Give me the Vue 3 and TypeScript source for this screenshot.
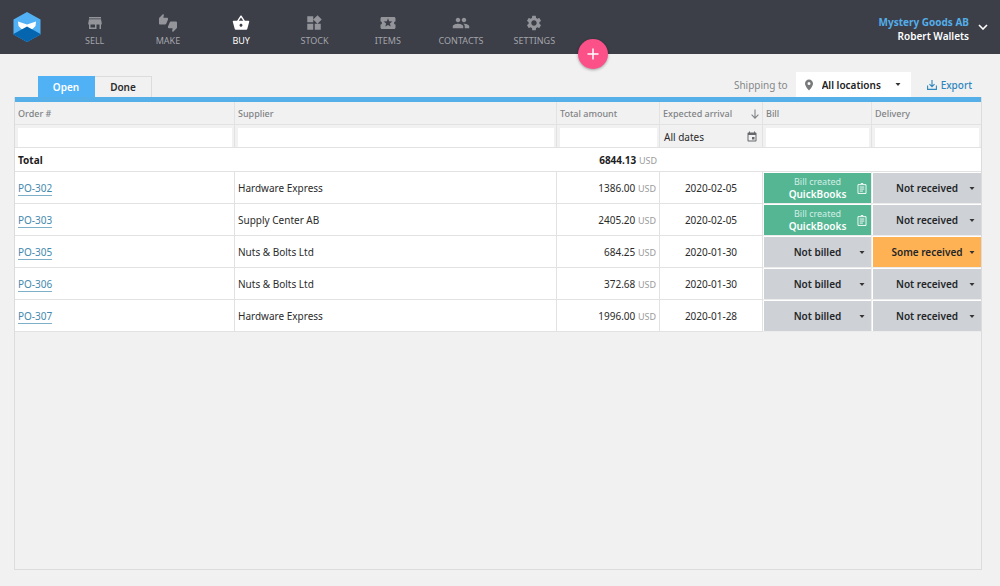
<script setup lang="ts">
import { ref } from 'vue'

interface NavItem {
  label: string
  icon: string
  active?: boolean
}

interface Order {
  id: string
  supplier: string
  amount: string
  arrival: string
  billed: boolean
  delivery: string
}

const navItems: NavItem[] = [
  {
    label: 'SELL',
    icon: 'M20 4H4v2h16V4zm1 10v-2l-1-5H4l-1 5v2h1v6h10v-6h4v6h2v-6h1zm-9 4H6v-4h6v4z',
  },
  {
    label: 'MAKE',
    icon: 'M12 6c0-.55-.45-1-1-1H5.82l.66-3.18.02-.23c0-.31-.13-.59-.33-.8L5.38 0 .44 4.94C.17 5.21 0 5.59 0 6v6.5c0 .83.67 1.5 1.5 1.5h6.75c.62 0 1.15-.38 1.38-.91l2.26-5.29c.07-.17.11-.36.11-.55V6zm10.5 4h-6.75c-.62 0-1.15.38-1.38.91l-2.26 5.29c-.07.17-.11.36-.11.55V18c0 .55.45 1 1 1h5.18l-.66 3.18-.02.24c0 .31.13.59.33.8l.79.78 4.94-4.94c.27-.27.44-.65.44-1.06v-6.5c0-.83-.67-1.5-1.5-1.5z',
  },
  {
    label: 'BUY',
    active: true,
    icon: 'M17.21 9l-4.38-6.56c-.19-.28-.51-.42-.83-.42-.32 0-.64.14-.83.43L6.79 9H2c-.55 0-1 .45-1 1 0 .09.01.18.04.27l2.54 9.27c.23.84 1 1.46 1.92 1.46h13c.92 0 1.69-.62 1.93-1.46l2.54-9.27L23 10c0-.55-.45-1-1-1h-4.79zM9 9l3-4.4L15 9H9zm3 8c-1.1 0-2-.9-2-2s.9-2 2-2 2 .9 2 2-.9 2-2 2z',
  },
  {
    label: 'STOCK',
    icon: 'M13 13v8h8v-8h-8zM3 21h8v-8H3v8zM3 3v8h8V3H3zm13.66-1.31L11 7.34 16.66 13l5.66-5.66-5.66-5.66z',
  },
  {
    label: 'ITEMS',
    icon: 'M20 12c0-1.1.9-2 2-2V6c0-1.1-.9-2-2-2H4c-1.1 0-1.99.9-1.99 2v4c1.1 0 1.99.9 1.99 2s-.89 2-2 2v4c0 1.1.9 2 2 2h16c1.1 0 2-.9 2-2v-4c-1.1 0-2-.9-2-2zm-4.42 4.8L12 14.5l-3.58 2.3 1.08-4.12-3.29-2.69 4.24-.25L12 5.8l1.54 3.95 4.24.25-3.29 2.69 1.09 4.11z',
  },
  {
    label: 'CONTACTS',
    icon: 'M16 11c1.66 0 2.99-1.34 2.99-3S17.66 5 16 5c-1.66 0-3 1.34-3 3s1.34 3 3 3zm-8 0c1.66 0 2.99-1.34 2.99-3S9.66 5 8 5C6.34 5 5 6.34 5 8s1.34 3 3 3zm0 2c-2.33 0-7 1.17-7 3.5V19h14v-2.5c0-2.33-4.67-3.5-7-3.5zm8 0c-.29 0-.62.02-.97.05 1.16.84 1.97 1.97 1.97 3.45V19h6v-2.5c0-2.33-4.67-3.5-7-3.5z',
  },
  {
    label: 'SETTINGS',
    icon: 'M19.14 12.94c.04-.3.06-.61.06-.94 0-.32-.02-.64-.07-.94l2.03-1.58c.18-.14.23-.41.12-.61l-1.92-3.32c-.12-.22-.37-.29-.59-.22l-2.39.96c-.5-.38-1.03-.7-1.62-.94l-.36-2.54c-.04-.24-.24-.41-.48-.41h-3.84c-.24 0-.43.17-.47.41l-.36 2.54c-.59.24-1.13.57-1.62.94l-2.39-.96c-.22-.08-.47 0-.59.22L2.74 8.87c-.12.21-.08.47.12.61l2.03 1.58c-.05.3-.09.63-.09.94s.02.64.07.94l-2.03 1.58c-.18.14-.23.41-.12.61l1.92 3.32c.12.22.37.29.59.22l2.39-.96c.5.38 1.03.7 1.62.94l.36 2.54c.05.24.24.41.48.41h3.84c.24 0 .44-.17.47-.41l.36-2.54c.59-.24 1.13-.56 1.62-.94l2.39.96c.22.08.47 0 .59-.22l1.92-3.32c.12-.22.07-.47-.12-.61l-2.01-1.58zM12 15.6c-1.98 0-3.6-1.62-3.6-3.6s1.62-3.6 3.6-3.6 3.6 1.62 3.6 3.6-1.62 3.6-3.6 3.6z',
  },
]

const orders = ref<Order[]>([
  { id: 'PO-302', supplier: 'Hardware Express', amount: '1386.00', arrival: '2020-02-05', billed: true, delivery: 'Not received' },
  { id: 'PO-303', supplier: 'Supply Center AB', amount: '2405.20', arrival: '2020-02-05', billed: true, delivery: 'Not received' },
  { id: 'PO-305', supplier: 'Nuts & Bolts Ltd', amount: '684.25', arrival: '2020-01-30', billed: false, delivery: 'Some received' },
  { id: 'PO-306', supplier: 'Nuts & Bolts Ltd', amount: '372.68', arrival: '2020-01-30', billed: false, delivery: 'Not received' },
  { id: 'PO-307', supplier: 'Hardware Express', amount: '1996.00', arrival: '2020-01-28', billed: false, delivery: 'Not received' },
])

const tabs = ['Open', 'Done']
const currentTab = ref('Open')
</script>

<template>
  <div class="page">
    <header class="topbar">
      <a class="logo" href="#" aria-label="Home">
        <svg viewBox="0 0 28 30" width="28" height="30" aria-hidden="true">
          <path d="M14 0 27.500 7.500V22.500L14 30 .5 22.500V7.500z" fill="#52b1f5" />
          <path d="M5 9.500 14 12.500 23 9.500 22.500 14 19.500 17H16L14 15 12 17H8.500L5.500 14z" fill="#fff" />
          <path d="M.5 22 14 14.500 27.500 22v.5L14 30 .5 22.500z" fill="#0565ae" />
        </svg>
      </a>
      <nav class="nav">
        <a v-for="item in navItems" :key="item.label" href="#" class="nav-item" :class="{ active: item.active }">
          <svg viewBox="0 0 24 24" width="18" height="18" aria-hidden="true"><path :d="item.icon" /></svg>
          <span>{{ item.label }}</span>
        </a>
      </nav>
      <button class="add" type="button" aria-label="Add">
        <svg viewBox="0 0 12 12" width="12" height="12" aria-hidden="true">
          <path d="M6 .5v11M.5 6h11" stroke="#fff" stroke-width="1.500" />
        </svg>
      </button>
      <button class="account" type="button">
        <span class="account-names">
          <span class="company">Mystery Goods AB</span>
          <span class="user">Robert Wallets</span>
        </span>
        <svg viewBox="0 0 10 6" width="10" height="6" aria-hidden="true">
          <path d="M1 1l4 4 4-4" fill="none" stroke="#fff" stroke-width="1.600" />
        </svg>
      </button>
    </header>

    <main class="content">
      <div class="toolbar">
        <div class="tabs" role="tablist">
          <button
            v-for="tab in tabs"
            :key="tab"
            type="button"
            role="tab"
            class="tab"
            :class="{ selected: tab === currentTab }"
            :aria-selected="tab === currentTab"
            @click="currentTab = tab"
          >{{ tab }}</button>
        </div>
        <div class="tools">
          <label for="location">Shipping to</label>
          <div class="location">
            <svg class="pin" viewBox="0 0 24 24" width="12" height="12" aria-hidden="true">
              <path d="M12 1C7.600 1 4 4.500 4 9c0 6 8 14 8 14s8-8 8-14c0-4.500-3.600-8-8-8zm0 11a3 3 0 1 1 0-6 3 3 0 0 1 0 6z" />
            </svg>
            <select id="location">
              <option>All locations</option>
            </select>
            <svg class="caret" viewBox="0 0 6 3" width="6" height="3" aria-hidden="true"><path d="M.5 0h5L3 3z" /></svg>
          </div>
          <a class="export" href="#">
            <svg viewBox="0 0 10 10" width="10" height="10" aria-hidden="true">
              <path d="M5 0v6.500M2.500 4.200 5 6.700l2.500-2.500M.6 5.500v3.900h8.800V5.500" fill="none" stroke="currentColor" stroke-width="1.100" />
            </svg>
            Export
          </a>
        </div>
      </div>

      <section class="panel">
        <table>
          <colgroup>
            <col class="c-order" />
            <col />
            <col class="c-money" />
            <col class="c-money" />
            <col class="c-status" />
            <col class="c-status" />
          </colgroup>
          <thead>
            <tr class="titles">
              <th scope="col">Order #</th>
              <th scope="col">Supplier</th>
              <th scope="col">Total amount</th>
              <th scope="col">
                <span class="sorted">
                  Expected arrival
                  <svg viewBox="0 0 8 10" width="8" height="10" aria-hidden="true">
                    <path d="M4 .5v8.500M.6 5.700 4 9.100l3.400-3.400" fill="none" stroke="currentColor" stroke-width="1.100" />
                  </svg>
                </span>
              </th>
              <th scope="col">Bill</th>
              <th scope="col">Delivery</th>
            </tr>
            <tr class="filters">
              <td><input type="text" aria-label="Filter by order number" /></td>
              <td><input type="text" aria-label="Filter by supplier" /></td>
              <td><input type="text" aria-label="Filter by total amount" /></td>
              <td>
                <button class="dates" type="button">
                  All dates
                  <svg viewBox="0 0 24 24" width="12" height="12" aria-hidden="true">
                    <path d="M17 12h-5v5h5v-5zM16 1v2H8V1H6v2H5c-1.110 0-1.990.9-1.990 2L3 19c0 1.100.89 2 2 2h14c1.100 0 2-.9 2-2V5c0-1.100-.9-2-2-2h-1V1h-2zm3 18H5V8h14v11z" />
                  </svg>
                </button>
              </td>
              <td><input type="text" aria-label="Filter by bill" /></td>
              <td><input type="text" aria-label="Filter by delivery" /></td>
            </tr>
          </thead>
          <tbody>
            <tr class="total">
              <th scope="row" colspan="2">Total</th>
              <td class="amount"><strong>6844.13</strong> <small>USD</small></td>
              <td colspan="3"></td>
            </tr>
            <tr v-for="order in orders" :key="order.id" class="order">
              <td><a class="link" href="#">{{ order.id }}</a></td>
              <td>{{ order.supplier }}</td>
              <td class="amount">{{ order.amount }} <small>USD</small></td>
              <td class="date">{{ order.arrival }}</td>
              <td class="status-cell">
                <button v-if="order.billed" type="button" class="status billed">
                  <span class="billed-text">
                    <span class="billed-top">Bill created</span>
                    <span>QuickBooks</span>
                  </span>
                  <svg viewBox="0 0 10 12" width="10" height="11" aria-hidden="true">
                    <path d="M.6 1.800h8.800v9.600H.6zM3.500 1.500a1.500 1.100 0 0 1 3 0M2.500 4.400h5M2.500 6.600h5M2.500 8.800h3.500" fill="none" stroke="#fff" />
                  </svg>
                </button>
                <div v-else class="status">
                  <select :aria-label="`Bill for ${order.id}`">
                    <option>Not billed</option>
                  </select>
                  <svg class="caret" viewBox="0 0 6 3" width="6" height="3" aria-hidden="true"><path d="M.5 0h5L3 3z" /></svg>
                </div>
              </td>
              <td class="status-cell">
                <div class="status" :class="{ partial: order.delivery === 'Some received' }">
                  <select v-model="order.delivery" :aria-label="`Delivery for ${order.id}`">
                    <option>Not received</option>
                    <option>Some received</option>
                  </select>
                  <svg class="caret" viewBox="0 0 6 3" width="6" height="3" aria-hidden="true"><path d="M.5 0h5L3 3z" /></svg>
                </div>
              </td>
            </tr>
          </tbody>
        </table>
      </section>
    </main>
  </div>
</template>

<style>
body {
  margin: 0;
  background: #f1f1f1;
}
</style>

<style scoped>
.page {
  display: flex;
  flex-direction: column;
  box-sizing: border-box;
  min-height: 100vh;
  color: #2b2b2b;
  font-family: "Noto Sans", "Open Sans", sans-serif;
  font-size: 10px;
  line-height: 16px;
}

button,
input,
select {
  margin: 0;
  padding: 0;
  border: 0;
  border-radius: 0;
  background: none;
  color: inherit;
  font: inherit;
}

a {
  text-decoration: none;
}

svg {
  display: block;
  flex: none;
}

select {
  appearance: none;
}

.topbar {
  display: flex;
  align-items: center;
  height: 54px;
  padding: 0 12px 0 13px;
  background: #3c3e48;
}

.logo {
  width: 45px;
}

.nav {
  display: grid;
  grid-template-columns: repeat(7, 1fr);
  width: 513px;
}

.nav-item {
  display: flex;
  flex-direction: column;
  align-items: center;
  gap: 3px;
  padding-top: 6px;
  color: #a3a5aa;
  fill: #93959b;
  font-size: 9px;
  line-height: 12px;
}

.nav-item.active {
  color: #fff;
  fill: #fff;
}

.add {
  display: flex;
  align-items: center;
  justify-content: center;
  align-self: flex-end;
  width: 30px;
  height: 30px;
  margin: 0 0 -15px 7px;
  border-radius: 50%;
  background: #fc5089;
  box-shadow: 0 1px 3px rgba(0, 0, 0, 0.35);
}

.account {
  display: flex;
  align-items: center;
  gap: 9px;
  margin-left: auto;
  color: #fff;
  font-weight: 600;
  text-align: right;
}

.account-names {
  display: flex;
  flex-direction: column;
  padding-top: 4px;
  line-height: 14px;
}

.company {
  color: #53aee9;
  font-weight: 700;
}

.content {
  display: flex;
  flex: 1;
  flex-direction: column;
  padding: 16px 18px 16px 14px;
}

.toolbar {
  display: flex;
  align-items: flex-end;
  justify-content: space-between;
  height: 27px;
  padding: 0 10px 0 24px;
}

.tabs {
  display: flex;
}

.tab {
  width: 57px;
  height: 21px;
  border: solid #dcdcdc;
  border-width: 1px 1px 0 0;
  font-weight: 600;
}

.tab.selected {
  border-color: #50b1f5;
  background: #50b1f5;
  color: #fff;
}

.tools {
  display: flex;
  align-items: center;
  height: 25px;
  color: #85878a;
}

.location {
  display: grid;
  grid-template-columns: 26px 1fr 16px;
  align-items: center;
  width: 115px;
  height: 25px;
  margin: 0 16px 0 8px;
  background: #fff;
}

.location select {
  grid-area: 1 / 1 / 2 / 4;
  height: 100%;
  padding-left: 26px;
  color: #222;
  font-weight: 600;
}

.pin {
  grid-area: 1 / 1;
  justify-self: center;
  fill: #77797b;
}

.caret {
  fill: #333;
  pointer-events: none;
}

.location .caret {
  grid-area: 1 / 3;
}

.export {
  display: flex;
  align-items: center;
  gap: 4px;
  color: #2d86bd;
  font-weight: 500;
}

.panel {
  flex: 1;
  border: solid #dcdcdc;
  border-width: 0 1px 1px;
  box-shadow: inset 0 5px #55b0e9;
  padding-top: 5px;
}

table {
  width: 100%;
  border-collapse: separate;
  border-spacing: 0;
  table-layout: fixed;
}

.c-order {
  width: 220px;
}

.c-money {
  width: 103px;
}

.c-status {
  width: 109px;
}

th,
td {
  box-sizing: border-box;
  padding: 0 3px;
  border-right: 1px solid #e2e2e2;
  border-bottom: 1px solid #e2e2e2;
  text-align: left;
}

th:last-child,
td:last-child {
  border-right: 0;
}

.titles th {
  height: 23px;
  padding-top: 2px;
  color: #808285;
  font-size: 9px;
  font-weight: 500;
}

.sorted {
  display: flex;
  align-items: center;
  justify-content: space-between;
  white-space: nowrap;
}

.filters td {
  height: 23px;
  padding: 2px 2px 0 3px;
}

.filters input {
  display: block;
  box-sizing: border-box;
  width: 100%;
  height: 19px;
  background: #fff;
}

.dates {
  display: flex;
  align-items: center;
  justify-content: space-between;
  width: 100%;
  padding: 0 2px 0 1px;
  fill: #66686b;
}

.total th,
.total td {
  height: 24px;
  padding-top: 1px;
  border-right: 0;
  background: #fff;
  color: #1d1d1d;
}

.order td {
  height: 32px;
  background: #fff;
}

.link {
  border-bottom: 1px solid #7fb0c9;
  color: #4489ad;
  line-height: 13px;
}

.amount,
.total .amount {
  text-align: right;
}

small {
  color: #9b9b9b;
  font-size: 9px;
  line-height: 1;
}

.order .date {
  text-align: center;
}

.order .status-cell {
  padding: 1px 0 0 1px;
  border-color: #ececec;
}

.status {
  display: grid;
  grid-template-columns: 1fr 12px;
  align-items: center;
  width: 100%;
  height: 30px;
  background: #ced1d5;
  color: #232629;
  font-weight: 600;
}

.status select {
  grid-area: 1 / 1 / 2 / 3;
  width: 100%;
  height: 100%;
  text-align: center;
  text-align-last: center;
}

.status .caret {
  grid-area: 1 / 2;
}

.status.partial {
  background: #ffb254;
}

.status.billed {
  grid-template-columns: 1fr 14px;
  background: #55b694;
  color: #fff;
}

.billed-text {
  display: flex;
  flex-direction: column;
  padding-left: 14px;
  line-height: 13px;
}

.billed-top {
  color: #d2efe4;
  font-size: 9px;
  font-weight: 400;
  line-height: 12px;
}
</style>
